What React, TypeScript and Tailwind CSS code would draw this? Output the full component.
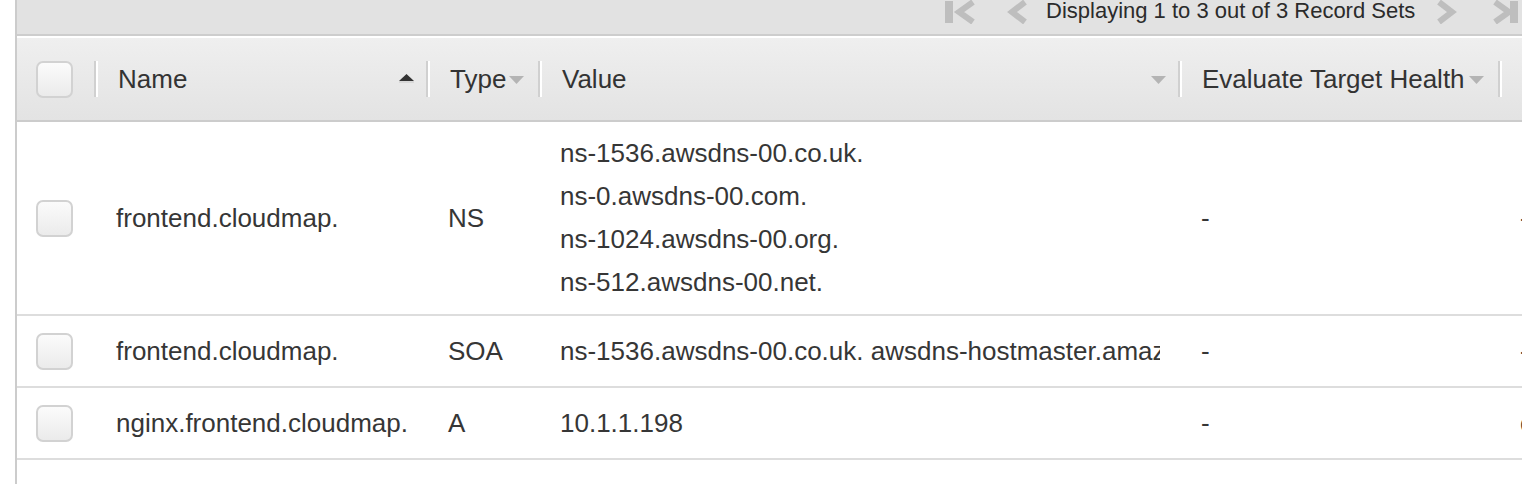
import React from 'react';

type Row = {
  name: string;
  type: string;
  values: string[];
  evaluate: string;
  last: string;
  tall?: boolean;
};

const rows: Row[] = [
  {
    name: 'frontend.cloudmap.',
    type: 'NS',
    values: ['ns-1536.awsdns-00.co.uk.', 'ns-0.awsdns-00.com.', 'ns-1024.awsdns-00.org.', 'ns-512.awsdns-00.net.'],
    evaluate: '-',
    last: '-',
    tall: true,
  },
  {
    name: 'frontend.cloudmap.',
    type: 'SOA',
    values: ['ns-1536.awsdns-00.co.uk. awsdns-hostmaster.amazon.com. 1 7200 900 1209600 86400'],
    evaluate: '-',
    last: '-',
  },
  {
    name: 'nginx.frontend.cloudmap.',
    type: 'A',
    values: ['10.1.1.198'],
    evaluate: '-',
    last: 'c',
  },
];

const cols = 'grid grid-cols-[77px_332px_112px_640px_320px_24px]';

const Checkbox = () => (
  <div className="w-[37px] h-[37px] rounded-[7px] border-2 border-[#d2d2d2] bg-linear-to-b from-[#fbfbfb] to-[#ebebeb]" />
);

const Sep = () => <div className="w-[4px] h-[36px] border-l-2 border-[#d0d0d0] bg-white shrink-0" />;

const ArrowDown = () => (
  <svg width="15" height="8" viewBox="0 0 15 8" className="shrink-0">
    <path d="M0 0 L15 0 L7.5 8 Z" fill="#b4b4b4" />
  </svg>
);

const ArrowUp = () => (
  <svg width="15" height="9" viewBox="0 0 15 9" className="shrink-0">
    <path d="M0 7 L7.5 0 L15 7 Z" fill="#333333" />
    <rect x="0" y="7" width="15" height="2" fill="#d8d8d8" />
  </svg>
);

const Chevron = ({ dir }: { dir: 'l' | 'r' }) => (
  <svg width="22" height="24" viewBox="0 0 22 24" className="shrink-0">
    <polyline
      points={dir === 'l' ? '19,2 6,12 19,22' : '3,2 16,12 3,22'}
      fill="none"
      stroke="#bebebe"
      strokeWidth="6"
    />
  </svg>
);

export default function App() {
  return (
    <div className="w-[1522px] h-[484px] overflow-hidden bg-white font-['Liberation_Sans',Arial,sans-serif]">
      <div className="ml-[15px] h-full border-l-2 border-[#cccccc]">
        {/* pager bar */}
        <div className="h-[36px] bg-[#e2e2e2] border-b-2 border-[#cdcdcd] flex items-start pl-[928px]">
          <svg width="32" height="24" viewBox="0 0 32 24" className="shrink-0">
            <rect x="0" y="1" width="8" height="22" fill="#bebebe" />
            <polyline points="28,2 14,12 28,22" fill="none" stroke="#bebebe" strokeWidth="6" />
          </svg>
          <div className="ml-[29px]">
            <Chevron dir="l" />
          </div>
          <div className="ml-[18px] w-[392px] text-[22px] leading-[22px] text-[#2b2b2b] whitespace-nowrap">
            Displaying 1 to 3 out of 3 Record Sets
          </div>
          <Chevron dir="r" />
          <svg width="30" height="24" viewBox="0 0 30 24" className="shrink-0 ml-[34px]">
            <polyline points="3,2 17,12 3,22" fill="none" stroke="#bebebe" strokeWidth="6" />
            <rect x="18" y="1" width="8" height="22" fill="#bebebe" />
          </svg>
        </div>

        {/* header */}
        <div className={`${cols} h-[86px] border-t-2 border-white border-b-2 border-b-[#cccccc] bg-linear-to-b from-[#efefef] to-[#e3e3e3] text-[26px] text-[#333333]`}>
          <div className="flex items-center pl-[19px]">
            <Checkbox />
          </div>
          <div className="flex items-center">
            <Sep />
            <span className="pl-[20px] flex-1">Name</span>
            <div className="pr-[12px] pb-[2px]">
              <ArrowUp />
            </div>
          </div>
          <div className="flex items-center">
            <Sep />
            <span className="pl-[20px]">Type</span>
            <div className="pl-[3px] pt-[2px]">
              <ArrowDown />
            </div>
          </div>
          <div className="flex items-center">
            <Sep />
            <span className="pl-[20px] flex-1">Value</span>
            <div className="pr-[12px] pt-[2px]">
              <ArrowDown />
            </div>
          </div>
          <div className="flex items-center">
            <Sep />
            <span className="pl-[20px] whitespace-nowrap">Evaluate Target Health</span>
            <div className="pl-[4px] pt-[2px]">
              <ArrowDown />
            </div>
          </div>
          <div className="flex items-center">
            <Sep />
          </div>
        </div>

        {/* rows */}
        {rows.map((r, i) => (
          <div
            key={i}
            className={`${cols} ${r.tall ? 'h-[194px]' : 'h-[72px]'} border-b-2 border-[#dddddd] text-[26px] text-[#363636] leading-[43px]`}
          >
            <div className="flex items-center pl-[19px]">
              <Checkbox />
            </div>
            <div className="flex items-center pl-[22px] whitespace-nowrap">{r.name}</div>
            <div className="flex items-center pl-[22px]">{r.type}</div>
            <div className="flex flex-col justify-center pl-[22px] pr-[18px] overflow-hidden whitespace-nowrap">
              {r.values.map((v, j) => (
                <div key={j} className="overflow-hidden">
                  {v}
                </div>
              ))}
            </div>
            <div className="flex items-center pl-[23px]">{r.evaluate}</div>
            <div className="flex items-center pl-[22px] overflow-hidden">{r.last}</div>
          </div>
        ))}
      </div>
    </div>
  );
}
